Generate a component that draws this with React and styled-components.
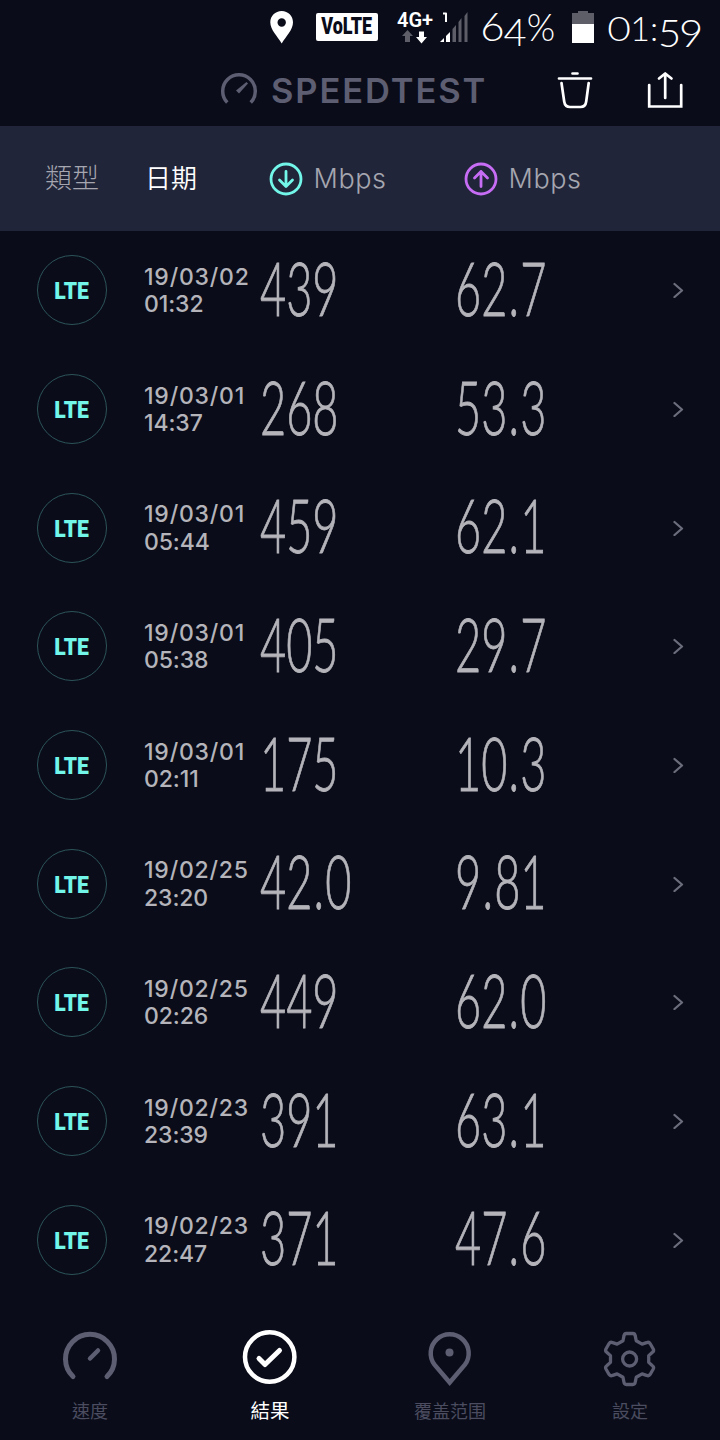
import React from "react";
import styled, { createGlobalStyle } from "styled-components";

const GlobalStyle = createGlobalStyle`
  * {
    box-sizing: border-box;
  }
  body {
    margin: 0;
    background: #0a0c19;
  }
`;

const Screen = styled.div`
  display: flex;
  flex-direction: column;
  width: 720px;
  height: 1440px;
  overflow: hidden;
  background: #0a0c19;
  color: #b4b4ba;
  font-family: "Inter", "Noto Sans CJK TC", sans-serif;
  svg {
    display: block;
    flex: none;
    fill: none;
    stroke-linecap: round;
    stroke-linejoin: round;
  }
`;

const StatusBar = styled.div`
  display: flex;
  align-items: flex-start;
  height: 54px;
  padding: 11px 0 0 270px;
  color: #fff;
`;

const VolteBadge = styled.div`
  display: flex;
  align-items: center;
  justify-content: center;
  width: 62px;
  height: 28px;
  margin: 2px 19px 0 22px;
  border-radius: 2px;
  background: #fff;
  color: #0a0c19;
  font: 900 23px/28px "Roboto", sans-serif;
  span {
    transform: scaleX(0.78);
  }
`;

const Network = styled.div`
  display: flex;
  flex-direction: column;
  width: 43px;
  padding-top: 1px;
  font: 600 20px/16px "Roboto", sans-serif;
  svg {
    margin: 2px 0 0 5px;
  }
`;

const StatusText = styled.div`
  display: flex;
  align-items: baseline;
  width: ${(props) => props.$width}px;
  margin: -4px 0 0 ${(props) => props.$gap}px;
  font: 300 34px/38px "Lato", sans-serif;
  white-space: nowrap;
`;

// old-style figures: some digits sit below the baseline
const Figure = styled.span`
  display: inline-flex;
  justify-content: center;
  width: ${(props) => props.$width}px;
  font-size: ${(props) => props.$size || 34}px;
  transform: translateY(${(props) => props.$drop || 0}px)
    scaleX(${(props) => props.$stretch || 1.2});
`;

const TitleBar = styled.header`
  display: flex;
  align-items: center;
  height: 72px;
  padding-left: 220px;
  h1 {
    width: 286px;
    margin: 2px 0 0 13px;
    color: #5d5e72;
    font-size: 34.5px;
    font-weight: 600;
    letter-spacing: 1.9px;
    line-height: 40px;
    white-space: nowrap;
  }
`;

const ActionIcon = styled.svg`
  margin-right: ${(props) => props.$gap || 0}px;
  stroke: #fff;
  stroke-width: 2.7;
`;

const columns = "107px 116px 195px 218px 1fr";

const TableHead = styled.div`
  display: grid;
  grid-template-columns: ${columns};
  align-items: center;
  height: 105px;
  padding-left: 37px;
  background: #212539;
  font-size: 27px;
`;

const HeadLabel = styled.span`
  padding: 0 0 3px ${(props) => props.$indent}px;
  color: ${(props) => (props.$active ? "#fff" : "#a5a6b0")};
  font-family: "Noto Sans CJK TC", sans-serif;
  font-size: ${(props) => (props.$active ? 26 : 27)}px;
  font-weight: ${(props) => (props.$active ? 350 : 300)};
  line-height: 40px;
`;

const Unit = styled.div`
  display: flex;
  align-items: center;
  gap: 11px;
  padding-left: 8.5px;
  color: #a5a6b0;
  font-weight: 300;
  letter-spacing: 0.6px;
  svg {
    stroke: ${(props) => props.$color};
    stroke-width: 2.8;
  }
`;

const Results = styled.ul`
  margin: 0;
  padding: 0;
  list-style: none;
`;

const Row = styled.li`
  display: grid;
  grid-template-columns: ${columns};
  align-items: center;
  height: 118.7px;
  padding-left: 37px;
`;

const TypeBadge = styled.div`
  display: flex;
  align-items: center;
  justify-content: center;
  width: 70px;
  height: 70px;
  padding-top: 2px;
  border: 1px solid #2c545a;
  border-radius: 50%;
  color: #73f6ea;
  font: 900 24px/28px "Roboto", sans-serif;
  span {
    transform: scaleX(0.88);
  }
`;

const DateCell = styled.div`
  padding-top: 2px;
  font-size: 23px;
  font-weight: 550;
  line-height: 27.5px;
  white-space: nowrap;
`;

const Day = styled.div`
  letter-spacing: 0.8px;
`;

const Time = styled.div`
  letter-spacing: -0.1px;
`;

const Speed = styled.div`
  margin-top: -5px;
  font: 300 74px/90px "Lato", sans-serif;
  -webkit-text-stroke: 0.9px currentColor;
  transform: scaleX(0.61);
  transform-origin: 0 50%;
  white-space: nowrap;
`;

const Point = styled.span`
  padding: 0 2px;
`;

const TabBar = styled.nav`
  display: grid;
  grid-template-columns: repeat(4, 1fr);
  padding-top: 28px;
`;

const Tab = styled.div`
  display: flex;
  flex-direction: column;
  align-items: center;
  color: ${(props) => (props.$active ? "#fff" : "#5d5e72")};
  svg {
    stroke: currentColor;
  }
  span {
    margin-top: 7px;
    color: ${(props) => (props.$active ? "#fff" : "#4b4c60")};
    font-family: "Noto Sans CJK TC", sans-serif;
    font-size: ${(props) => (props.$active ? 19.5 : 18)}px;
    line-height: 28px;
  }
`;

const results = [
  ["19/03/02", "01:32", "439", "62.7"],
  ["19/03/01", "14:37", "268", "53.3"],
  ["19/03/01", "05:44", "459", "62.1"],
  ["19/03/01", "05:38", "405", "29.7"],
  ["19/03/01", "02:11", "175", "10.3"],
  ["19/02/25", "23:20", "42.0", "9.81"],
  ["19/02/25", "02:26", "449", "62.0"],
  ["19/02/23", "23:39", "391", "63.1"],
  ["19/02/23", "22:47", "371", "47.6"],
];

const Value = ({ value }) => {
  const [whole, fraction] = value.split(".");
  return (
    <Speed>
      {whole}
      {fraction && <Point>.</Point>}
      {fraction}
    </Speed>
  );
};

const polar = (radius, degrees) => {
  const a = ((degrees - 90) * Math.PI) / 180;
  return `${(29 + radius * Math.cos(a)).toFixed(2)} ${(29 + radius * Math.sin(a)).toFixed(2)}`;
};

const gearPath =
  [0, 60, 120, 180, 240, 300]
    .map(
      (t, i) =>
        `${i ? "L" : "M"}${polar(19.4, t - 20)}L${polar(23.5, t - 14)}Q${polar(26, t - 12)} ${polar(25.7, t - 7)}L${polar(25.7, t + 7)}Q${polar(26, t + 12)} ${polar(23.5, t + 14)}L${polar(19.4, t + 20)}`
    )
    .join("") + "Z";

const App = () => {
  return (
    <>
      <GlobalStyle />
      <Screen>
        <StatusBar>
          <svg width="24" height="33" viewBox="0 0 24 33">
            <path
              fill="#fff"
              fillRule="evenodd"
              d="M11.7 0C5.2 0 .3 5 .3 11.2.3 19 7.5 25 11.7 32.5 16 25 23 19 23 11.2 23 5 18.2 0 11.7 0ZM11.700 7.300a4.200 4.200 0 1 1 0 8.400 4.200 4.200 0 0 1 0-8.400Z"
            />
          </svg>
          <VolteBadge>
            <span>VoLTE</span>
          </VolteBadge>
          <Network>
            4G+
            <svg width="26" height="14" viewBox="0 0 26 14">
              <path fill="#5d5e68" d="M5.500 0 11 6H8v6H3V6H0Z" />
              <path fill="#fff" d="M17 1.500h5V7h3l-5.500 6.500L14 7h3Z" />
            </svg>
          </Network>
          <svg width="28" height="32" viewBox="0 0 28 32">
            <path fill="#fff" d="M0 31 4 27v4ZM6 25l4-4v10H6Z" />
            <path
              fill="#5d5e68"
              d="M12.500 18l3.500-4v17h-3.500ZM18.500 11l3-4v24h-3ZM24.500 5l3-4v30h-3Z"
            />
            <path stroke="#fff" strokeWidth="2" strokeLinecap="butt" d="M3 2.500h3V11" />
          </svg>
          <StatusText $width={91} $gap={13}>
            <Figure $width={23} $size={40} $stretch={1.05}>6</Figure>
            <Figure $width={22} $size={38} $drop={5} $stretch={1.05}>4</Figure>
            <Figure $width={30} $size={38} $stretch={0.96}>%</Figure>
          </StatusText>
          <svg width="22" height="33" viewBox="0 0 22 33">
            <path fill="#5d5e68" d="M6 0h10v2h6v11H0V2h6Z" />
            <path fill="#fff" d="M0 13h22v19H0Z" />
          </svg>
          <StatusText $width={100} $gap={13}>
            <Figure $width={24}>0</Figure>
            <Figure $width={18} $stretch={1}>1</Figure>
            <Figure $width={10} $stretch={1}>:</Figure>
            <Figure $width={21} $size={38} $drop={6} $stretch={1.05}>5</Figure>
            <Figure $width={22} $size={38} $drop={6} $stretch={1.1}>9</Figure>
          </StatusText>
        </StatusBar>

        <TitleBar>
          <svg width="38" height="38" viewBox="0 0 38 38">
            <path
              stroke="#5d5e72"
              strokeWidth="3.500"
              strokeLinecap="butt"
              d="M7.300 31.500a16.300 16.300 0 1 1 23.400 0"
            />
            <path fill="#5d5e72" d="M26.500 11 28 12.500 19 22.500 16 19.500Z" />
          </svg>
          <h1>SPEEDTEST</h1>
          <ActionIcon $gap={54} width="36" height="38" viewBox="0 0 36 38">
            <path d="M15.500 2.500h5M2 7.500h32M4.500 12l2.700 18.500Q8 36 13 36h10.500q5 0 5.700-5.500L31.700 12" />
          </ActionIcon>
          <ActionIcon width="36" height="38" viewBox="0 0 36 38">
            <path strokeLinejoin="miter" d="M2.200 14v21.500h32V14" />
            <path d="M18.200 27V3M12 7.500 18.200 2.500 24.500 7.500" />
          </ActionIcon>
        </TitleBar>

        <TableHead>
          <HeadLabel $indent={8}>類型</HeadLabel>
          <HeadLabel $indent={1} $active>
            日期
          </HeadLabel>
          <Unit $color="#73f6ea">
            <svg width="34" height="34" viewBox="0 0 34 34">
              <circle cx="17" cy="17" r="15" />
              <path d="M17 9.500v15M10.500 18l6.500 6.500 6.500-6.500" />
            </svg>
            Mbps
          </Unit>
          <Unit $color="#c66cf5">
            <svg width="34" height="34" viewBox="0 0 34 34">
              <circle cx="17" cy="17" r="15" />
              <path d="M17 24.500v-15M10.500 16l6.500-6.500 6.500 6.500" />
            </svg>
            Mbps
          </Unit>
        </TableHead>

        <Results>
          {results.map(([date, time, download, upload]) => (
            <Row key={date + time}>
              <TypeBadge>
                <span>LTE</span>
              </TypeBadge>
              <DateCell>
                <Day>{date}</Day>
                <Time>{time}</Time>
              </DateCell>
              <Value value={download} />
              <Value value={upload} />
              <svg width="12" height="16" viewBox="0 0 12 16">
                <path stroke="#6c6d7c" strokeWidth="2.300" d="M1.500 2 9 8.500 1.500 15" />
              </svg>
            </Row>
          ))}
        </Results>

        <TabBar>
          <Tab>
            <svg width="58" height="62" viewBox="0 0 58 62">
              <path strokeWidth="5" d="M12 49.500a24.500 24.500 0 1 1 34 0" />
              <path strokeWidth="4.500" d="M29 31.500 37 23.500" />
            </svg>
            <span>速度</span>
          </Tab>
          <Tab $active>
            <svg width="58" height="62" viewBox="0 0 58 62">
              <circle cx="28.700" cy="30" r="24.700" strokeWidth="4.500" />
              <path strokeWidth="5" d="M18 31.500 24 37.500 38.500 23.500" />
            </svg>
            <span>結果</span>
          </Tab>
          <Tab>
            <svg width="58" height="62" viewBox="0 0 58 62">
              <path
                strokeWidth="4.500"
                strokeLinejoin="miter"
                d="M28.700 55.500 13.500 37.700A19 19 0 1 1 43.900 37.700Z"
              />
              <circle cx="28.500" cy="25.500" r="4" fill="currentColor" stroke="none" />
            </svg>
            <span>覆盖范围</span>
          </Tab>
          <Tab>
            <svg width="58" height="62" viewBox="0.400 -3 58 62">
              <path strokeWidth="3.300" d={gearPath} />
              <circle cx="29" cy="29" r="7" strokeWidth="3.300" />
            </svg>
            <span>設定</span>
          </Tab>
        </TabBar>
      </Screen>
    </>
  );
};

export default App;
